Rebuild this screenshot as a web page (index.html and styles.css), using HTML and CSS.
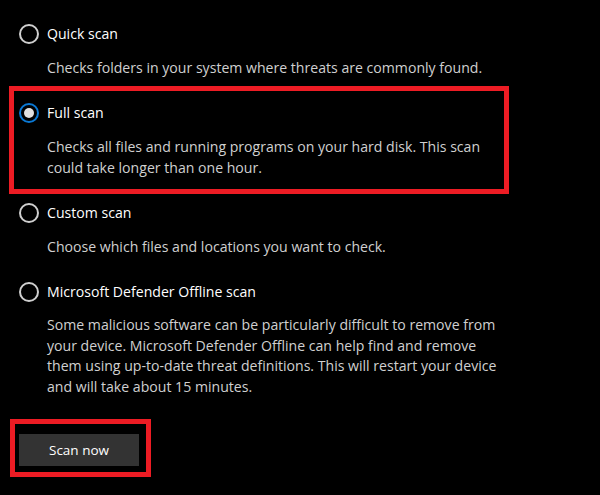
FILE: index.html
```html
<!DOCTYPE html>
<html>
<head>
<meta charset="utf-8">
<link rel="stylesheet" href="styles.css">
</head>
<body>
<div class="page">
  <div class="option">
    <div class="title-row"><span class="radio"></span><span class="title">Quick scan</span></div>
    <p class="desc">Checks folders in your system where threats are commonly found.</p>
  </div>
  <div class="option option--framed">
    <div class="title-row"><span class="radio radio--checked"></span><span class="title">Full scan</span></div>
    <p class="desc">Checks all files and running programs on your hard disk. This scan<br>could take longer than one hour.</p>
  </div>
  <div class="option">
    <div class="title-row"><span class="radio"></span><span class="title">Custom scan</span></div>
    <p class="desc">Choose which files and locations you want to check.</p>
  </div>
  <div class="option">
    <div class="title-row"><span class="radio"></span><span class="title">Microsoft Defender Offline scan</span></div>
    <p class="desc desc--long">Some malicious software can be particularly difficult to remove from<br>your device. Microsoft Defender Offline can help find and remove<br>them using up-to-date threat definitions. This will restart your device<br>and will take about 15 minutes.</p>
  </div>
  <div class="actions">
    <button class="btn">Scan now</button>
  </div>
</div>
</body>
</html>
```
FILE: styles.css
```css
html, body {
  margin: 0;
  padding: 0;
  background: #000;
}
body {
  width: 600px;
  height: 495px;
  overflow: hidden;
  font-family: "Open Sans", "Liberation Sans", sans-serif;
  font-size: 14.1px;
  color: #fff;
}
.page {
  padding: 24px 0 0 19px;
  display: flex;
  flex-direction: column;
}
.option {
  position: relative;
  display: flex;
  flex-direction: column;
  gap: 13px;
  margin-bottom: 25px;
}
.option--framed::after {
  content: "";
  position: absolute;
  left: -10px;
  top: -17px;
  width: 500px;
  height: 108px;
  box-sizing: border-box;
  border: 5px solid #ed1c24;
  pointer-events: none;
}
.title-row {
  display: flex;
  align-items: center;
  height: 20px;
  gap: 8px;
}
.radio {
  width: 20px;
  height: 20px;
  box-sizing: border-box;
  border: 2px solid #cfcfcf;
  border-radius: 50%;
  display: flex;
  align-items: center;
  justify-content: center;
  flex: none;
}
.radio--checked {
  border-color: #0a78d4;
}
.radio--checked::before {
  content: "";
  width: 10px;
  height: 10px;
  border-radius: 50%;
  background: #e0e0e0;
}
.title {
  font-size: 14.1px;
  color: #fff;
  line-height: 20px;
}
.desc {
  margin: 0;
  padding-left: 28px;
  color: #d0d0d0;
  line-height: 21px;
}
.desc--long {
  line-height: 20.7px;
}
.actions {
  position: relative;
  margin-top: 11px;
  align-self: flex-start;
}
.actions::after {
  content: "";
  position: absolute;
  left: -9px;
  top: -15px;
  right: -12px;
  bottom: -11px;
  border: 5px solid #ed1c24;
  pointer-events: none;
}
.btn {
  display: block;
  width: 120px;
  height: 32px;
  background: #333;
  border: none;
  color: #fff;
  font-family: inherit;
  font-size: 13.5px;
  padding: 0;
}
```
